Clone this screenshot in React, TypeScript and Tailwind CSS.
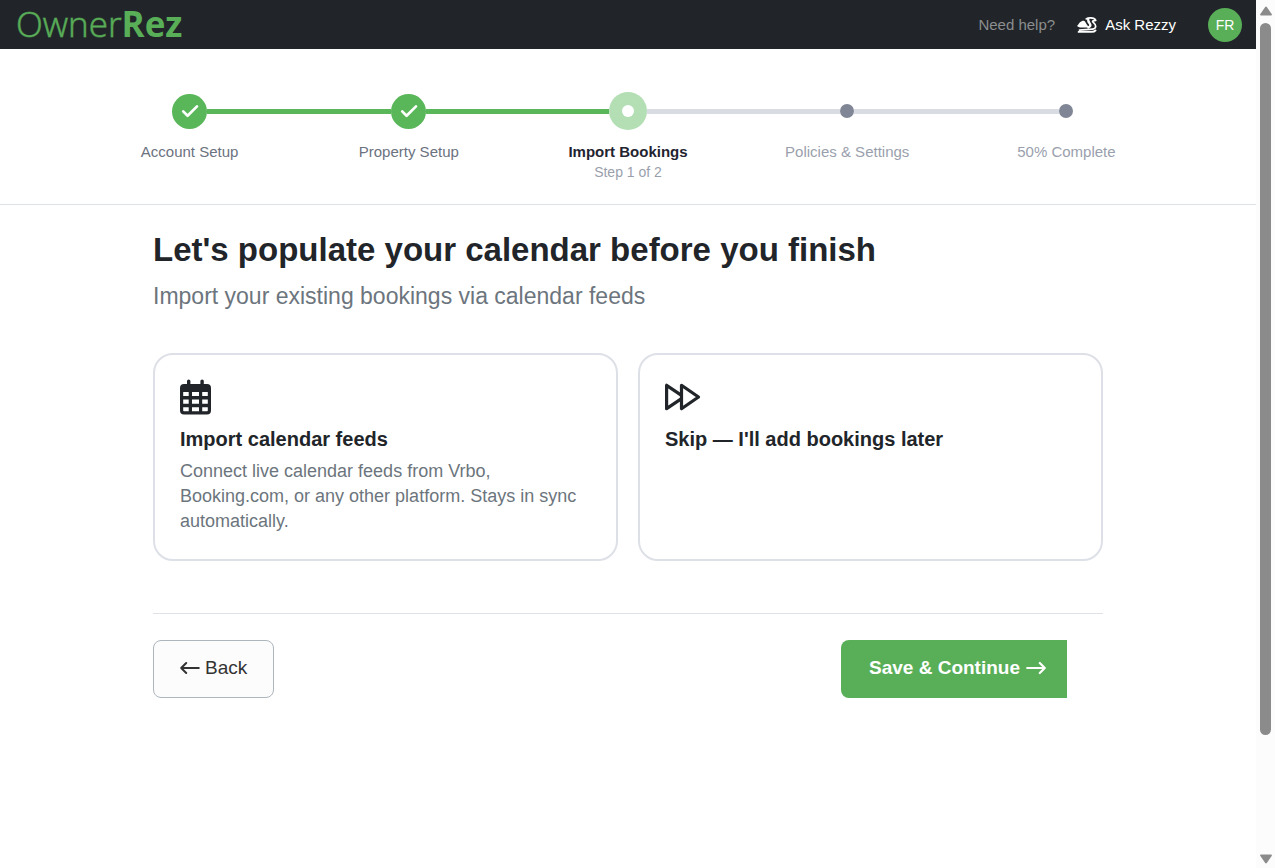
import type { ReactNode } from "react";

type StepState = "done" | "current" | "todo";

const steps: { label: string; state: StepState; note?: string }[] = [
  { label: "Account Setup", state: "done" },
  { label: "Property Setup", state: "done" },
  { label: "Import Bookings", state: "current", note: "Step 1 of 2" },
  { label: "Policies & Settings", state: "todo" },
  { label: "50% Complete", state: "todo" },
];

const labelStyles: Record<StepState, string> = {
  done: "text-[#6b7280]",
  current: "font-bold text-[#1f2430]",
  todo: "text-[#9a9fad]",
};

function RezzyIcon() {
  return (
    <svg viewBox="0 0 20 16" className="h-4 w-5" fill="none" stroke="#fff" strokeLinecap="round" strokeLinejoin="round" aria-hidden="true">
      <path d="M0 8.800C1.300 8.200 1.600 6.600 3 5.300c1-.9 2.200-1.500 3.700-1.500 1 .2 1.700 1.200 2.200 2.200.7 1.400 1.400 2.300 2.600 3.500.3.600-.4 1.100-1.500 1.100H4.200C2.500 10.600.6 9.900 0 8.800Z" fill="#fff" stroke="none" />
      <path d="M9.300 1.900C10.300 1.100 11.600.9 13.700.9c2.500 0 4.300.8 5 2.500l-2.600.5" strokeWidth="1.800" />
      <path d="M11.200 2.500c-.3 3 2.200 3.800 2.200 5.700 0 1.200-.6 1.800-2 2.200" strokeWidth="2.400" />
      <path d="M15.600 4.600c1.200 1.200 3.200 2.500 3.100 4.700-.1 1.800-1.400 2.600-3.200 2.900-4 .6-9 .2-13 .9" strokeWidth="1.700" />
      <path d="M1.600 14.900h13.200c1.900 0 3-.5 3.800-1.500" strokeWidth="1.800" />
    </svg>
  );
}

function CheckIcon() {
  return (
    <svg viewBox="0 0 18 14" className="h-[14px] w-[18px]" fill="none" stroke="#fff" strokeWidth="2.700" strokeLinecap="round" strokeLinejoin="round" aria-hidden="true">
      <path d="M2.200 7.400 6.600 11.800 16 2.400" />
    </svg>
  );
}

function CalendarIcon() {
  return (
    <svg viewBox="0 0 32 36" className="h-9 w-8 overflow-visible" fill="#212529" aria-hidden="true">
      <rect x="7" y="-.6" width="3.400" height="7" rx="1.700" />
      <rect x="20.400" y="-.6" width="3.400" height="7" rx="1.700" />
      <path
        fillRule="evenodd"
        d="M4 4h23a4 4 0 0 1 4 4v22.400a4 4 0 0 1-4 4H4a4 4 0 0 1-4-4V8a4 4 0 0 1 4-4ZM3.200 12v4h5.500v-4ZM12 12v4h7v-4ZM22.200 12v4h5.600v-4ZM3.200 19.400v4.400h5.500v-4.400ZM12 19.400v4.400h7v-4.400ZM22.200 19.400v4.400h5.600v-4.400ZM3.200 27.200v3.200q0 .8.8.8h4.700v-4ZM12 27.200v4h7v-4ZM22.200 27.200v4H27q.8 0 .8-.8v-3.200Z"
      />
    </svg>
  );
}

function SkipIcon() {
  return (
    <svg viewBox="0 0 36 36" className="size-9" fill="none" stroke="#212529" strokeWidth="3.200" strokeLinejoin="round" aria-hidden="true">
      <path d="M16.500 15.300 1.600 5.300v23.400l14.900-10" />
      <path d="M16.500 5.300 33.500 17 16.500 28.700Z" />
    </svg>
  );
}

function ArrowIcon({ flip = false, weight }: { flip?: boolean; weight: number }) {
  return (
    <svg viewBox="0 0 20 14" className="h-[14px] w-5" fill="none" stroke="currentColor" strokeWidth={weight} strokeLinecap="round" strokeLinejoin="round" aria-hidden="true">
      <path d={flip ? "M18.800 7H1.200M6.200 2 1.200 7l5 5" : "M1.200 7h17.600M13.800 2l5 5-5 5"} />
    </svg>
  );
}

function Marker({ state }: { state: StepState }) {
  if (state === "done")
    return (
      <span className="flex size-[35px] items-center justify-center rounded-full bg-[#59b659]">
        <CheckIcon />
      </span>
    );
  if (state === "current")
    return (
      <span className="flex size-[38px] items-center justify-center rounded-full bg-[#b4dfb5]">
        <span className="size-3 rounded-full bg-white" />
      </span>
    );
  return <span className="size-[14px] rounded-full bg-[#808695]" />;
}

function lineColor(index: number, filled: number, last: boolean) {
  if (last) return "bg-transparent";
  return index < filled ? "bg-[#59b659]" : "bg-[#d9dce2]";
}

function Choice({ icon, title, children }: { icon: ReactNode; title: string; children?: ReactNode }) {
  return (
    <button type="button" className="flex flex-col items-start rounded-[20px] border-2 border-[#dee0e7] bg-white p-[25px] text-left">
      {icon}
      <span className="mt-2 text-[20px] leading-[30px] font-bold text-[#212529]">{title}</span>
      {children && <span className="mt-[5px] text-[18px] leading-[25px] text-[#6c757d]">{children}</span>}
    </button>
  );
}

function Scrollbar() {
  return (
    <div className="flex w-[19px] shrink-0 flex-col items-center bg-[#fcfcfc] pt-[6px] pb-1" aria-hidden="true">
      <svg viewBox="0 0 12 10" className="h-[10px] w-3" fill="#8b8b8b">
        <path d="M5.200 1q.8-.9 1.600 0l5 7.200q.5 1.300-.8 1.300H1Q-.3 9.500.2 8.200Z" />
      </svg>
      <div className="mt-[7px] flex w-[11px] grow flex-col">
        <div className="grow-[712] rounded-full bg-[#8b8b8b]" />
        <div className="grow-[119]" />
      </div>
      <svg viewBox="0 0 12 10" className="h-[10px] w-3" fill="#8b8b8b">
        <path d="M5.200 9q.8.9 1.600 0l5-7.200Q12.300.5 11 .5H1Q-.3.5.2 1.800Z" />
      </svg>
    </div>
  );
}

export default function App() {
  return (
    <div className="flex min-h-screen bg-white font-['Liberation_Sans',Arial,sans-serif] text-[#212529]">
      <div className="min-w-0 flex-1">
        <header className="flex h-[49px] items-center justify-between bg-[#212529] pr-[14px] pl-4">
          <a href="#home" className="pb-[2px] font-['Open_Sans','Noto_Sans',sans-serif] text-[35px] leading-[45px] text-[#59ae58]">
            <span className="font-light [-webkit-text-stroke:1px_#59ae5899]">Owner</span>
            <span className="font-bold">Rez</span>
          </a>
          <nav className="flex items-center text-[15px] leading-6">
            <a href="#help" className="text-[#8b8d8f]">Need help?</a>
            <a href="#rezzy" className="ml-[22px] flex items-center gap-2 text-white">
              <RezzyIcon />
              Ask Rezzy
            </a>
            <button type="button" aria-label="Account" className="ml-8 flex size-[34px] items-center justify-center rounded-full bg-[#59ae58] text-[14px] text-white">
              FR
            </button>
          </nav>
        </header>

        <ol className="flex h-[156px] border-b border-[#dee2e6] px-20 pt-[43px]">
          {steps.map((step, i) => (
            <li key={step.label} className="flex flex-1 flex-col items-center" aria-current={step.state === "current" ? "step" : undefined}>
              <div className="flex h-[38px] w-full items-center">
                <span className={`h-[5px] flex-1 ${lineColor(i - 1, 2, i === 0)}`} />
                <Marker state={step.state} />
                <span className={`h-[5px] flex-1 ${lineColor(i, 2, i === steps.length - 1)}`} />
              </div>
              <span className={`mt-3 text-[15px] leading-5 ${labelStyles[step.state]}`}>{step.label}</span>
              {step.note && <span className="text-[14px] leading-5 text-[#9a9fad]">{step.note}</span>}
            </li>
          ))}
        </ol>

        <main className="mx-auto max-w-[950px] pt-6">
          <h1 className="text-[33px] leading-[42px] font-bold">Let's populate your calendar before you finish</h1>
          <p className="mt-[9px] text-[23px] leading-8 text-[#6c757d]">Import your existing bookings via calendar feeds</p>

          <div className="mt-[41px] grid grid-cols-2 gap-5">
            <Choice icon={<CalendarIcon />} title="Import calendar feeds">
              Connect live calendar feeds from Vrbo, Booking.com, or any other platform. Stays in sync automatically.
            </Choice>
            <Choice icon={<SkipIcon />} title="Skip — I'll add bookings later" />
          </div>

          <div className="mt-[52px] flex justify-between border-t border-[#dee2e6] pt-[26px] pr-9">
            <button type="button" className="flex h-[58px] items-center gap-[5px] rounded-lg border border-[#adb5bd] bg-[#fcfcfd] px-[26px] pb-[2px] text-[19px] text-[#333]">
              <ArrowIcon flip weight={2} />
              Back
            </button>
            <button type="button" className="flex h-[58px] items-center gap-[6px] rounded-l-lg bg-[#59ae58] pr-[21px] pb-[2px] pl-7 text-[19px] font-bold text-white">
              Save &amp; Continue
              <ArrowIcon weight={2.2} />
            </button>
          </div>
        </main>
      </div>
      <Scrollbar />
    </div>
  );
}
